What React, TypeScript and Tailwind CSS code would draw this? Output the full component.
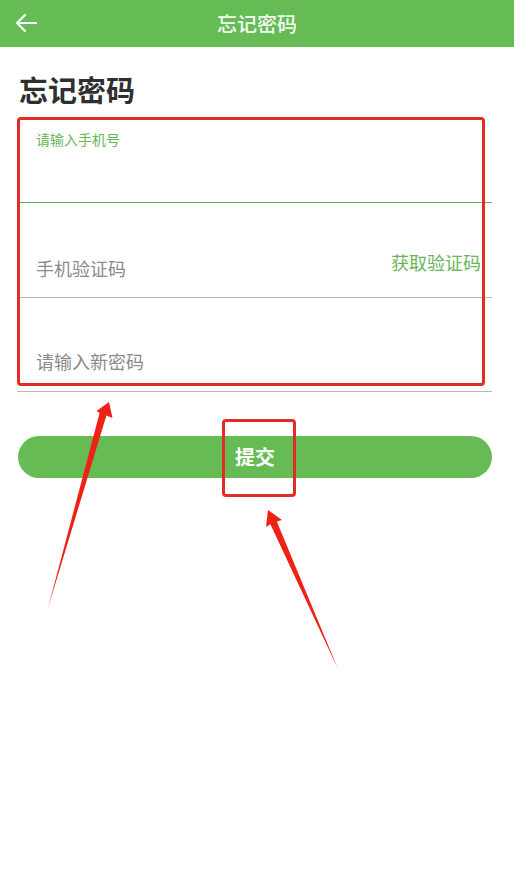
import React from "react";

export default function App() {
  return (
    <div
      className="relative w-[514px] h-[894px] bg-white overflow-hidden"
      style={{ fontFamily: '"Noto Sans CJK SC", "Noto Sans", sans-serif' }}
    >
      <header className="h-[47px] bg-[#65bb54] flex items-center relative">
        <svg className="absolute left-[15px] top-[13px]" width="22" height="20" viewBox="0 0 22 20" fill="none">
          <path d="M21 10H2.5M10 2L2 10l8 8" stroke="#ffffff" strokeWidth="2.2" strokeLinecap="round" strokeLinejoin="round" />
        </svg>
        <div className="w-full text-center text-[20px] font-medium text-[#f4faf2] leading-none">忘记密码</div>
      </header>

      <h1 className="pl-[19px] pt-[22px] text-[29px] leading-[40px] font-bold text-[#2f2f2f]">忘记密码</h1>

      <div className="mt-[13px] pl-[20px] pr-[22px]">
        <div className="h-[81px] border-b border-[#5fb84e] pl-[16px] pt-[7px]">
          <div className="text-[14px] leading-[20px] text-[#6ab55a]">请输入手机号</div>
        </div>
        <div className="h-[95px] border-b border-[#b8b8b8] pl-[16px] pr-[11px] flex items-end justify-between pb-[16px]">
          <div className="text-[18px] leading-[26px] text-[#8a8a8a]">手机验证码</div>
          <div className="text-[18px] leading-[26px] text-[#6ab55a] mb-[6px]">获取验证码</div>
        </div>
        <div className="h-[94px] border-b border-[#b8b8b8] -ml-[3px] pl-[19px] flex items-end pb-[17px]">
          <div className="text-[18px] leading-[26px] text-[#8a8a8a]">请输入新密码</div>
        </div>
      </div>

      <div className="mt-[44px] pl-[18px] pr-[22px]">
        <button className="w-full h-[42px] rounded-full bg-[#66bb55] text-white text-[20px] font-bold flex items-center justify-center">
          提交
        </button>
      </div>

      <div className="absolute left-[17px] top-[117px] w-[468px] h-[269px] border-[3px] border-[#e02d27] rounded-[4px]" />
      <div className="absolute left-[222px] top-[419px] w-[74px] h-[78px] border-[3px] border-[#e02d27] rounded-[4px]" />

      <svg className="absolute left-0 top-0 pointer-events-none" width="514" height="894" viewBox="0 0 514 894">
        <polygon points="109,402 112.5,418 106.4,415.5 48,608 99.6,413 96.5,411" fill="#ee2117" />
        <polygon points="268,510 282,520 276.8,521.4 338,669 270.4,524.2 266,527" fill="#ee2117" />
      </svg>
    </div>
  );
}
